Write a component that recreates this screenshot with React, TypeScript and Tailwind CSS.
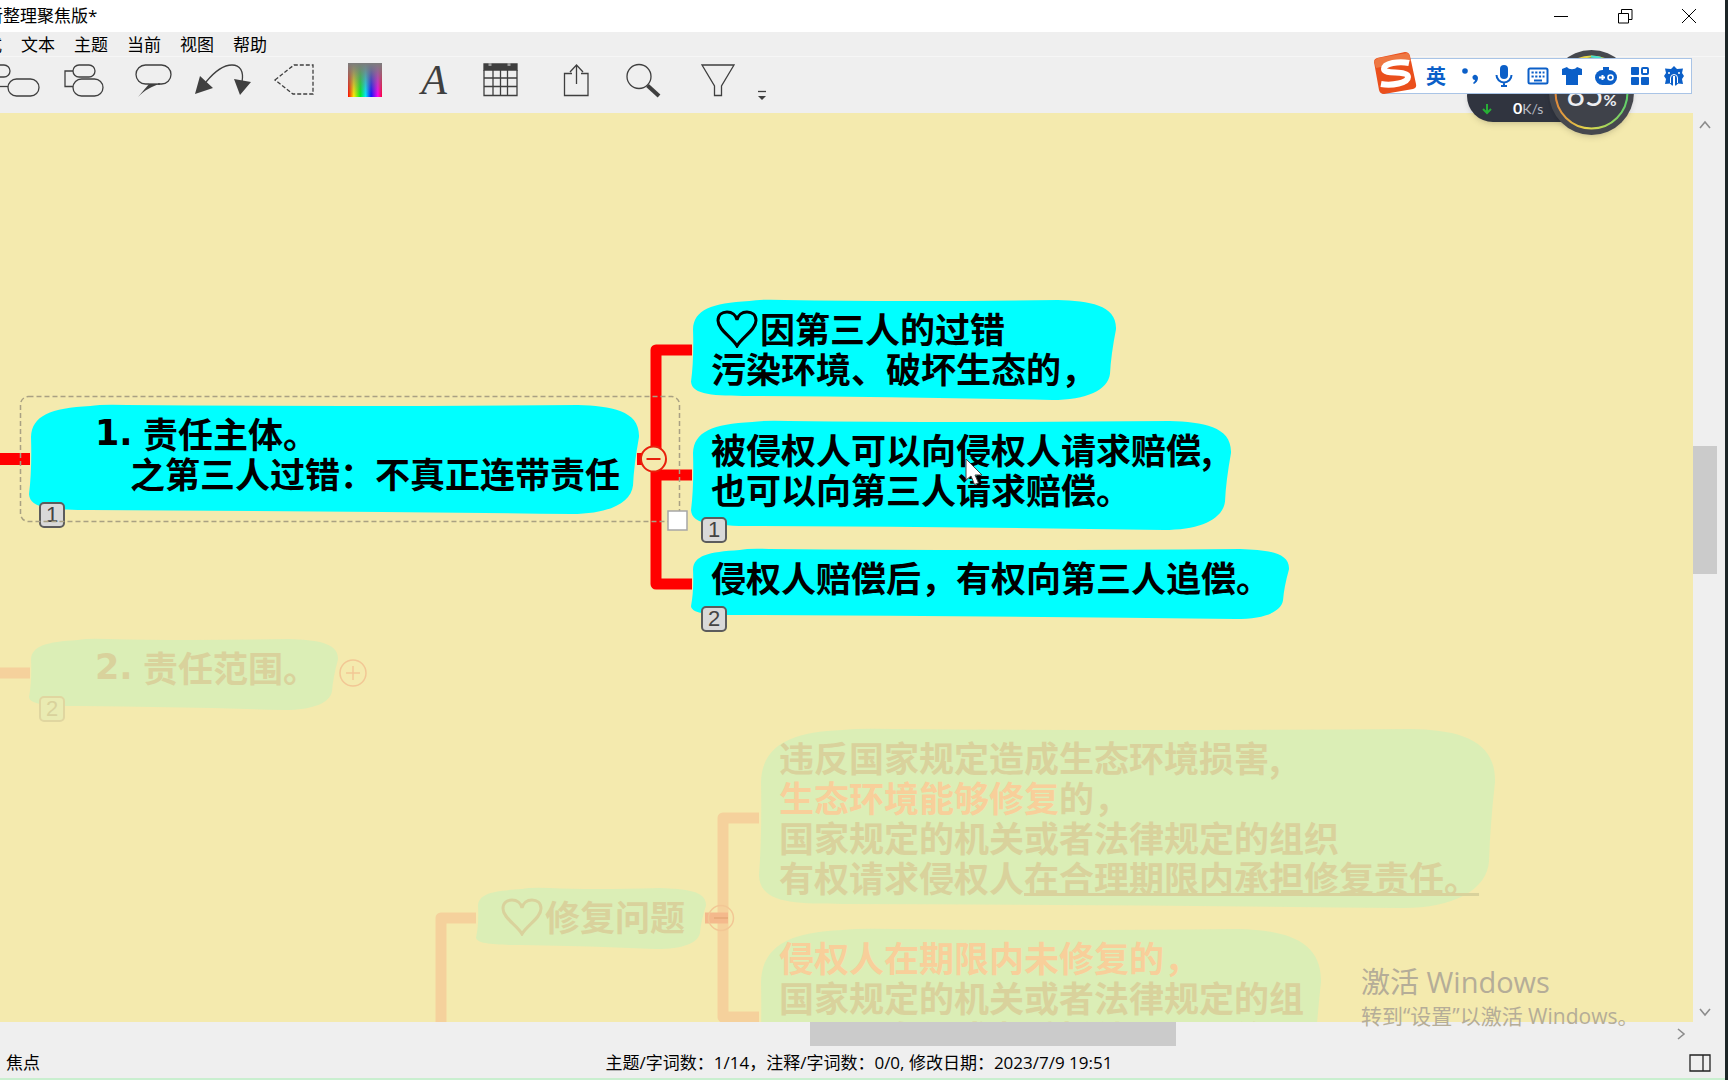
import type { ReactNode } from "react";

type NodeProps = {
  w: number;
  h: number;
  faded?: boolean;
  badge?: string;
  className: string;
  children: ReactNode;
};

const menus = ["格式", "文本", "主题", "当前", "视图", "帮助"];

// hand-drawn looking outline, corners grow with the node's height
function blobPath(w: number, h: number) {
  const rx = Math.min(90, 26 + h * 0.32);
  const ry = h * 0.3;
  return [
    `M2 ${ry}`,
    `C3 ${ry * 0.35} ${rx * 0.35} 4 ${rx} 2`,
    `Q${rx * 1.2} 0 ${rx * 1.6} 1`,
    `Q${w * 0.5} 3 ${w - rx} 1`,
    `C${w - rx * 0.45} 2 ${w + 1} ${h * 0.06} ${w} ${h * 0.3}`,
    `Q${w - 5} ${h * 0.55} ${w - 6} ${h * 0.74}`,
    `C${w - 8} ${h * 0.9} ${w - rx * 0.5} ${h} ${w - rx * 1.1} ${h}`,
    `Q${w * 0.5} ${h - 3} ${rx} ${h - 4}`,
    `C${rx * 0.4} ${h - 4} 1 ${h - 5} 0 ${h - ry * 0.6}`,
    `Q3 ${h * 0.6} 2 ${ry}Z`,
  ].join(" ");
}

function Badge({ faded, children }: { faded?: boolean; children: ReactNode }) {
  return (
    <span
      className={`absolute -bottom-3 left-[10px] flex h-[26px] w-[26px] items-center justify-center rounded-[5px] border-2 font-['Liberation_Sans'] text-[22px] leading-none ${
        faded
          ? "border-[#e0d6a0] bg-[#e9ebb2] text-[#d9d29c]"
          : "border-[#5c5c5c] bg-[#d9d9d9] text-[#444444]"
      }`}
    >
      {children}
    </span>
  );
}

function TopicNode({ w, h, faded, badge, className, children }: NodeProps) {
  return (
    <div className={`absolute pt-[9px] ${className}`}>
      <svg
        className="absolute top-0 left-0"
        width={w}
        height={h}
        viewBox={`0 0 ${w} ${h}`}
        overflow="visible"
      >
        <path d={blobPath(w, h)} fill={faded ? "#dbeeb6" : "#00ffff"} />
      </svg>
      <div
        className={`relative whitespace-pre text-[35px] leading-10 font-bold ${
          faded ? "text-[#d9d29c]" : "text-black"
        }`}
      >
        {children}
      </div>
      {badge && <Badge faded={faded}>{badge}</Badge>}
    </div>
  );
}

function Heart() {
  return (
    <svg width="45" height="40" viewBox="0 0 45 40" fill="none" stroke="currentColor" strokeWidth="3">
      <path d="M22 38C17 29 3 22 3 12.500C3 7 7 4 12 4C17 4 21 7 22 12C23 7 27 4 32 4C37 4 41 7 41 12.500C41 22 27 29 22 38Z" />
    </svg>
  );
}

function Connectors() {
  return (
    <svg className="absolute top-0 left-0" width="1500" height="920" fill="none">
      <g stroke="#ff0000" strokeWidth="11">
        <path d="M0 346H30M637 346H655" strokeWidth="12" />
        <path d="M692 237H656V471H692" strokeLinejoin="round" />
        <path d="M656 362H692" />
      </g>
      <g stroke="#f5d19c" strokeWidth="11">
        <path d="M0 560H30" />
        <path d="M759 705H723V904H759" strokeLinejoin="round" />
        <path d="M476 805H441V915" strokeLinejoin="round" />
        <path d="M705 805H728" stroke="#f4b98c" />
      </g>
      <rect x="20.500" y="283.500" width="659" height="125" rx="8" stroke="#a9a183" strokeWidth="1.500" strokeDasharray="5 3" />
      <circle cx="653.500" cy="346" r="12.500" fill="#f4eaae" stroke="#e8200c" strokeWidth="2" />
      <path d="M646.500 346H660.500" stroke="#e8200c" strokeWidth="2" />
      <circle cx="353" cy="560" r="13" stroke="#f2c795" strokeWidth="1.500" />
      <path d="M346 560H360M353 553V567" stroke="#f2c795" strokeWidth="1.500" />
      <circle cx="721" cy="805" r="12.500" stroke="#f2c795" strokeWidth="1.500" />
      <path d="M714 805H728" stroke="#e6a878" strokeWidth="1.500" />
      <rect x="668" y="398" width="19" height="19" fill="#ffffff" stroke="#a6a6a6" strokeWidth="1.500" />
    </svg>
  );
}

function ToolButton({ label, children }: { label: string; children: ReactNode }) {
  return (
    <button type="button" aria-label={label} className="flex h-10 w-14 shrink-0 items-center justify-center">
      {children}
    </button>
  );
}

function ToolIcon({ children }: { children: ReactNode }) {
  return (
    <svg width="56" height="40" viewBox="0 0 56 40" overflow="visible" fill="none" stroke="#3f3f3f" strokeWidth="1.300">
      {children}
    </svg>
  );
}

function Toolbar() {
  return (
    <div className="-ml-[15px] flex h-[57px] items-start gap-[14px] border-t border-[#f6f6f6] pt-[3px]">
      <ToolButton label="主题">
        <ToolIcon>
          <rect x="-5" y="5" width="30" height="12" rx="6" />
          <rect x="23" y="19" width="31" height="17" rx="8.500" />
          <path d="M8 26.500H23" />
        </ToolIcon>
      </ToolButton>
      <ToolButton label="子主题">
        <ToolIcon>
          <rect x="18" y="5" width="22" height="12" rx="6" />
          <rect x="18" y="19" width="30" height="17" rx="8.500" />
          <path d="M18 11H10V26.500H18" />
        </ToolIcon>
      </ToolButton>
      <ToolButton label="标注">
        <ToolIcon>
          <path d="M24 24H20.500A9.500 9.500 0 0 1 20.500 5H36.500A9.500 9.500 0 0 1 36.500 24H33" />
          <path d="M24 24H35C27 26 20 30 13 37Z" fill="#3f3f3f" stroke="none" />
          <path d="M24 24H35" />
        </ToolIcon>
      </ToolButton>
      <ToolButton label="关系">
        <ToolIcon>
          <path d="M11 22C20 11 29 5 37 5C45 5 49 11 47 22" />
          <path d="M5 16L18 28L0 34ZM39 19L56 22L45 35Z" fill="#3f3f3f" stroke="none" />
        </ToolIcon>
      </ToolButton>
      <ToolButton label="边界">
        <ToolIcon>
          <path d="M10 20L29 5H48V34H28Z" strokeDasharray="4 2" />
        </ToolIcon>
      </ToolButton>
      <ToolButton label="颜色">
        <ToolIcon>
          <defs>
            <linearGradient id="hue">
              <stop offset="0" stopColor="#ff0000" />
              <stop offset=".17" stopColor="#ffee00" />
              <stop offset=".36" stopColor="#00f020" />
              <stop offset=".52" stopColor="#00e8ff" />
              <stop offset=".68" stopColor="#1010ff" />
              <stop offset=".88" stopColor="#ff00f0" />
              <stop offset="1" stopColor="#ff0030" />
            </linearGradient>
            <linearGradient id="grey" x1="0" y1="0" x2="0" y2="1">
              <stop offset="0" stopColor="#7d7d7d" />
              <stop offset=".2" stopColor="#7d7d7d" stopOpacity=".85" />
              <stop offset="1" stopColor="#7d7d7d" stopOpacity="0" />
            </linearGradient>
          </defs>
          <rect x="13" y="3" width="34" height="34" fill="url(#hue)" stroke="none" />
          <rect x="13" y="3" width="34" height="34" fill="url(#grey)" stroke="none" />
        </ToolIcon>
      </ToolButton>
      <ToolButton label="字体">
        <span className="pl-[2px] font-['Liberation_Serif'] text-[42px] leading-10 text-[#3f3f3f] italic">A</span>
      </ToolButton>
      <ToolButton label="日期">
        <ToolIcon>
          <path d="M9 4H42V10H9Z" fill="#3f3f3f" />
          <path d="M9 10V35.500H42V10M18 10V35M25.500 10V35M32.500 10V35M9 18H42M9 26.500H42" />
          <path d="M15 3V6M34 3V6" stroke="#9a9a9a" strokeWidth="3" />
        </ToolIcon>
      </ToolButton>
      <ToolButton label="分享">
        <ToolIcon>
          <path d="M27 13.500H19.500V35.500H43V13.500H36M31.500 24V6M25 12L31.500 5L38 12" />
        </ToolIcon>
      </ToolButton>
      <ToolButton label="搜索">
        <ToolIcon>
          <circle cx="24" cy="16.500" r="12" />
          <path d="M32.500 25.500L44 36" strokeWidth="4" />
        </ToolIcon>
      </ToolButton>
      <ToolButton label="筛选">
        <ToolIcon>
          <path d="M17 5H49L36.500 26V35.500H29.500V26Z" />
        </ToolIcon>
      </ToolButton>
      <button type="button" aria-label="更多" className="h-10 w-[14px] shrink-0">
        <svg width="14" height="40" viewBox="0 0 14 40">
          <path d="M3 31.500H11" stroke="#3f3f3f" strokeWidth="1.300" />
          <path d="M3 36H11L7 40Z" fill="#3f3f3f" />
        </svg>
      </button>
    </div>
  );
}

function SpeedMeter() {
  return (
    <div className="absolute top-[50px] right-[91px] h-[86px] w-[167px] font-['Lato',sans-serif]">
      <div className="absolute top-5 left-0 flex h-[52px] w-32 items-end rounded-l-[26px] bg-[#30343f] pb-[3px] pl-[14px] shadow-md">
        <svg width="12" height="12" viewBox="0 0 12 12" className="mb-1" fill="none" stroke="#27b035" strokeWidth="2">
          <path d="M6 1V10M2 6L6 10L10 6" />
        </svg>
        <span className="ml-5 text-base leading-[18px] font-bold text-white">
          0<span className="text-sm font-normal text-[#b9bcc4]">K/s</span>
        </span>
      </div>
      <div className="absolute top-0 right-0 flex h-[85px] w-[85px] items-center justify-center rounded-full bg-[#46484e] pt-1 shadow-md">
        <svg className="absolute inset-0" width="85" height="85" viewBox="0 0 85 85" fill="none" strokeWidth="2">
          <defs>
            <linearGradient id="ring">
              <stop offset="0" stopColor="#e0893a" />
              <stop offset=".45" stopColor="#e3d94e" />
              <stop offset="1" stopColor="#5fd06a" />
            </linearGradient>
          </defs>
          <circle cx="42.500" cy="42.500" r="36" fill="#3f424a" stroke="url(#ring)" />
          <path d="M42 6.500A36 36 0 0 1 52 8" stroke="#46e0d0" />
        </svg>
        <span className="relative text-[32px] leading-none text-[#eceef2]">
          85<span className="text-base font-bold">%</span>
        </span>
      </div>
    </div>
  );
}

function ImeBar() {
  return (
    <div className="absolute top-[52px] right-[33px] flex">
      <div className="mt-[6px] flex h-[36px] items-center border border-[#a9c4e6] bg-white pl-9 text-[#0b5fc8]">
        <button type="button" className="w-[34px] font-['Noto_Sans_CJK_SC'] text-xl leading-none font-bold">
          英
        </button>
        <button type="button" aria-label="标点" className="flex w-[34px] justify-center">
          <svg width="24" height="24" viewBox="0 0 24 24" fill="currentColor">
            <circle cx="7" cy="7" r="2.800" />
            <path d="M16 11a3 3 0 0 1 4 3c0 3-2 5-4 6l-1-1c1-1 2-2 2-3a2.600 2.600 0 0 1-1-5Z" />
          </svg>
        </button>
        <button type="button" aria-label="语音" className="flex w-[34px] justify-center">
          <svg width="24" height="24" viewBox="0 0 24 24" fill="none" stroke="currentColor" strokeWidth="2">
            <rect x="8" y="1" width="8" height="14" rx="4" fill="currentColor" stroke="none" />
            <path d="M4.500 11A7.500 7.500 0 0 0 19.500 11M12 18.500V21M9 22H15" />
          </svg>
        </button>
        <button type="button" aria-label="键盘" className="flex w-[34px] justify-center">
          <svg width="24" height="24" viewBox="0 0 24 24" fill="none" stroke="currentColor" strokeWidth="2">
            <rect x="2.500" y="4.500" width="19" height="15" rx="1.500" />
            <path d="M5.500 8.500H18.500M5.500 12.500H18.500" strokeDasharray="2.200 1.500" strokeWidth="2.200" />
            <path d="M8 16.500H16" />
          </svg>
        </button>
        <button type="button" aria-label="皮肤" className="flex w-[34px] justify-center">
          <svg width="24" height="24" viewBox="0 0 24 24" fill="currentColor">
            <path d="M7 3C9 6 15 6 17 3L22 5L22 11H18V21H6V11H2L2 5Z" />
          </svg>
        </button>
        <button type="button" aria-label="游戏" className="flex w-[34px] justify-center">
          <svg width="24" height="24" viewBox="0 0 24 24">
            <path d="M9 3H15V7H9Z" fill="currentColor" />
            <rect x="1" y="6" width="22" height="15" rx="7.500" fill="currentColor" />
            <path d="M5 13.500H11M8.500 11V16" stroke="#ffffff" strokeWidth="2" />
            <circle cx="16.500" cy="13.500" r="2.500" fill="none" stroke="#ffffff" strokeWidth="1.600" />
          </svg>
        </button>
        <button type="button" aria-label="工具箱" className="flex w-[34px] justify-center">
          <svg width="24" height="24" viewBox="0 0 24 24" fill="currentColor">
            <rect x="3" y="3" width="8" height="8" rx="1" />
            <rect x="14" y="4" width="6" height="6" rx="1" fill="none" stroke="currentColor" strokeWidth="2" />
            <rect x="3" y="13" width="8" height="8" rx="1" />
            <rect x="13" y="13" width="8" height="8" rx="1" />
          </svg>
        </button>
        <button type="button" aria-label="设置" className="flex w-[34px] justify-center">
          <svg width="24" height="24" viewBox="0 0 24 24" fill="currentColor">
            <path d="M12 2L15 5L21 4.500L20 9L22 12L20 15L21 20L16 19.500L14 21.500H10L8 19.500L3 20L4 15L2 12L4 9L3 4.500L9 5Z" />
            <path d="M12 22V12" stroke="#ffffff" strokeWidth="2" />
            <path d="M8.500 19V14A3.500 3.500 0 0 1 15.500 14V19" fill="none" stroke="#ffffff" strokeWidth="1" />
            <circle cx="7" cy="9" r="1" fill="#ffffff" />
            <circle cx="17" cy="9" r="1" fill="#ffffff" />
          </svg>
        </button>
      </div>
      <svg className="absolute top-0 -left-[10px]" width="46" height="44" viewBox="0 0 46 44">
        <path d="M5 6Q2 7 2 10L7 38Q8 42 12 42L41 37Q45 36 44 32L38 4Q37 0 33 0Z" fill="#ea4f1c" />
        <path d="M2 9L6 6L35 1Q38 2 38 6L39 9L4 16Z" fill="#ee7742" />
        <path
          d="M37 11C27 9 12 11 12 17C12 23 36 18 36 25C36 31 20 34 9 32"
          fill="none"
          stroke="#ffffff"
          strokeWidth="6"
        />
      </svg>
    </div>
  );
}

function MindMap() {
  return (
    <main className="relative min-w-0 flex-1 overflow-hidden bg-[#f4eaae] font-['Noto_Sans_CJK_SC',sans-serif]">
      <TopicNode w={610} h={110} badge="1" className="top-[291px] left-[29px] h-[112px]">
        <div className="flex pl-[66px]">
          <span className="w-12 font-['DejaVu_Sans']">1.</span>
          责任主体。
        </div>
        <div className="pl-[101px]">之第三人过错：不真正连带责任</div>
      </TopicNode>
      <TopicNode w={425} h={101} className="top-[186px] left-[691px] pl-5">
        <div className="flex pl-1">
          <Heart />
          因第三人的过错
        </div>
        <div>污染环境、破坏生态的，</div>
      </TopicNode>
      <TopicNode w={540} h={110} badge="1" className="top-[307px] left-[691px] h-[111px] pl-5">
        <div>被侵权人可以向侵权人请求赔偿,</div>
        <div>也可以向第三人请求赔偿。</div>
      </TopicNode>
      <TopicNode w={598} h={71} badge="2" className="top-[435px] left-[691px] h-[72px] pl-5">
        <div>侵权人赔偿后，有权向第三人追偿。</div>
      </TopicNode>

      <TopicNode w={309} h={72} faded badge="2" className="top-[525px] left-[29px] h-[72px]">
        <div className="flex pl-[66px]">
          <span className="w-12 font-['DejaVu_Sans']">2.</span>
          责任范围。
        </div>
      </TopicNode>
      <TopicNode w={230} h={62} faded className="top-[774px] left-[476px] pl-6">
        <div className="flex">
          <Heart />
          修复问题
        </div>
      </TopicNode>
      <TopicNode w={736} h={180} faded className="top-[615px] left-[759px] pl-5">
        <div>违反国家规定造成生态环境损害,</div>
        <div>
          <span className="text-[#f8cf9a]">生态环境能够修复</span>的，
        </div>
        <div>国家规定的机关或者法律规定的组织</div>
        <div>
          有权请求侵权人
          <span className="underline decoration-[3px] underline-offset-[1px] [text-decoration-skip-ink:none]">
            在合理期限内承担修复责任。
          </span>
        </div>
      </TopicNode>
      <TopicNode w={562} h={180} faded className="top-[815px] left-[759px] pl-5">
        <div className="text-[#f8cf9a]">侵权人在期限内未修复的，</div>
        <div>国家规定的机关或者法律规定的组</div>
        <div>织可以自行或者委托他人进行修</div>
      </TopicNode>

      <Connectors />
      <svg className="absolute top-[345px] left-[965px]" width="18" height="28" viewBox="0 0 18 28">
        <path d="M1 1V22L6 18L9.500 26.500L13.500 25L10 17H17Z" fill="#ffffff" stroke="#444444" strokeWidth="1" />
      </svg>
    </main>
  );
}

function Chevron({ className }: { className: string }) {
  return (
    <svg className={className} width="12" height="12" viewBox="0 0 12 12" fill="none" stroke="#8c8c8c" strokeWidth="1.600">
      <path d="M1 9L6 3L11 9" />
    </svg>
  );
}

export default function App() {
  return (
    <div className="flex h-screen overflow-hidden bg-[#1c2527] pr-[3px] font-['Open_Sans','Noto_Sans_CJK_SC',sans-serif] text-[17px] text-black">
      <div className="relative flex min-w-0 flex-1 flex-col overflow-hidden border-b-2 border-[#c9efcf] bg-[#efefef]">
        <header className="flex h-8 shrink-0 items-center justify-between bg-white pr-1">
          <h1 className="-ml-[14px] leading-8">新整理聚焦版*</h1>
          <div className="flex">
            <button type="button" aria-label="最小化" className="flex h-7 w-16 items-center justify-center">
              <svg width="14" height="14" viewBox="0 0 14 14" stroke="#000000">
                <path d="M0 7.500H14" />
              </svg>
            </button>
            <button type="button" aria-label="还原" className="flex h-7 w-16 items-center justify-center">
              <svg width="15" height="15" viewBox="0 0 15 15" fill="none" stroke="#000000">
                <path d="M.5 4.500H10.500V14H.5ZM3.500 4.500V.5H14V10.500H10.500" />
              </svg>
            </button>
            <button type="button" aria-label="关闭" className="flex h-7 w-16 items-center justify-center">
              <svg width="14" height="14" viewBox="0 0 14 14" stroke="#000000">
                <path d="M0 0L14 14M14 0L0 14" />
              </svg>
            </button>
          </div>
        </header>

        <nav className="-ml-8 flex h-6 shrink-0 items-center gap-[19px] pt-[2px]">
          {menus.map((menu) => (
            <button key={menu} type="button" className="leading-6 whitespace-nowrap">
              {menu}
            </button>
          ))}
        </nav>
        <Toolbar />

        <div className="flex min-h-0 flex-1">
          <MindMap />
          <div className="flex w-8 shrink-0 flex-col justify-between pt-[6px] pb-1">
            <Chevron className="ml-[6px]" />
            <div className="mb-[118px] h-32 w-6 bg-[#cbcbcb]" />
            <Chevron className="ml-[6px] rotate-180" />
          </div>
        </div>

        <div className="flex h-6 shrink-0 items-center pr-[38px]">
          <div className="ml-[48%] h-6 w-[366px] bg-[#cbcbcb]" />
          <Chevron className="ml-auto rotate-90" />
        </div>

        <footer className="flex h-8 shrink-0 items-center px-[6px] pt-[2px]">
          <div className="w-[35%]">焦点</div>
          <div className="leading-7 whitespace-pre">
            主题/字词数：1/14，注释/字词数：0/0, 修改日期：2023/7/9 19:51
          </div>
          <button type="button" aria-label="侧边栏" className="ml-auto pr-2">
            <svg width="22" height="18" viewBox="0 0 22 18" fill="none" stroke="#222222" strokeWidth="1.300">
              <path d="M1 1H21V17H1ZM14 1V17" />
            </svg>
          </button>
        </footer>

        <SpeedMeter />
        <ImeBar />
        <div className="pointer-events-none absolute right-[90px] bottom-[48px] w-[274px] whitespace-nowrap text-[#b5ad98]">
          <p className="text-[29px] leading-10">激活 Windows</p>
          <p className="text-[21px] leading-7">转到“设置”以激活 Windows。</p>
        </div>
      </div>
    </div>
  );
}
